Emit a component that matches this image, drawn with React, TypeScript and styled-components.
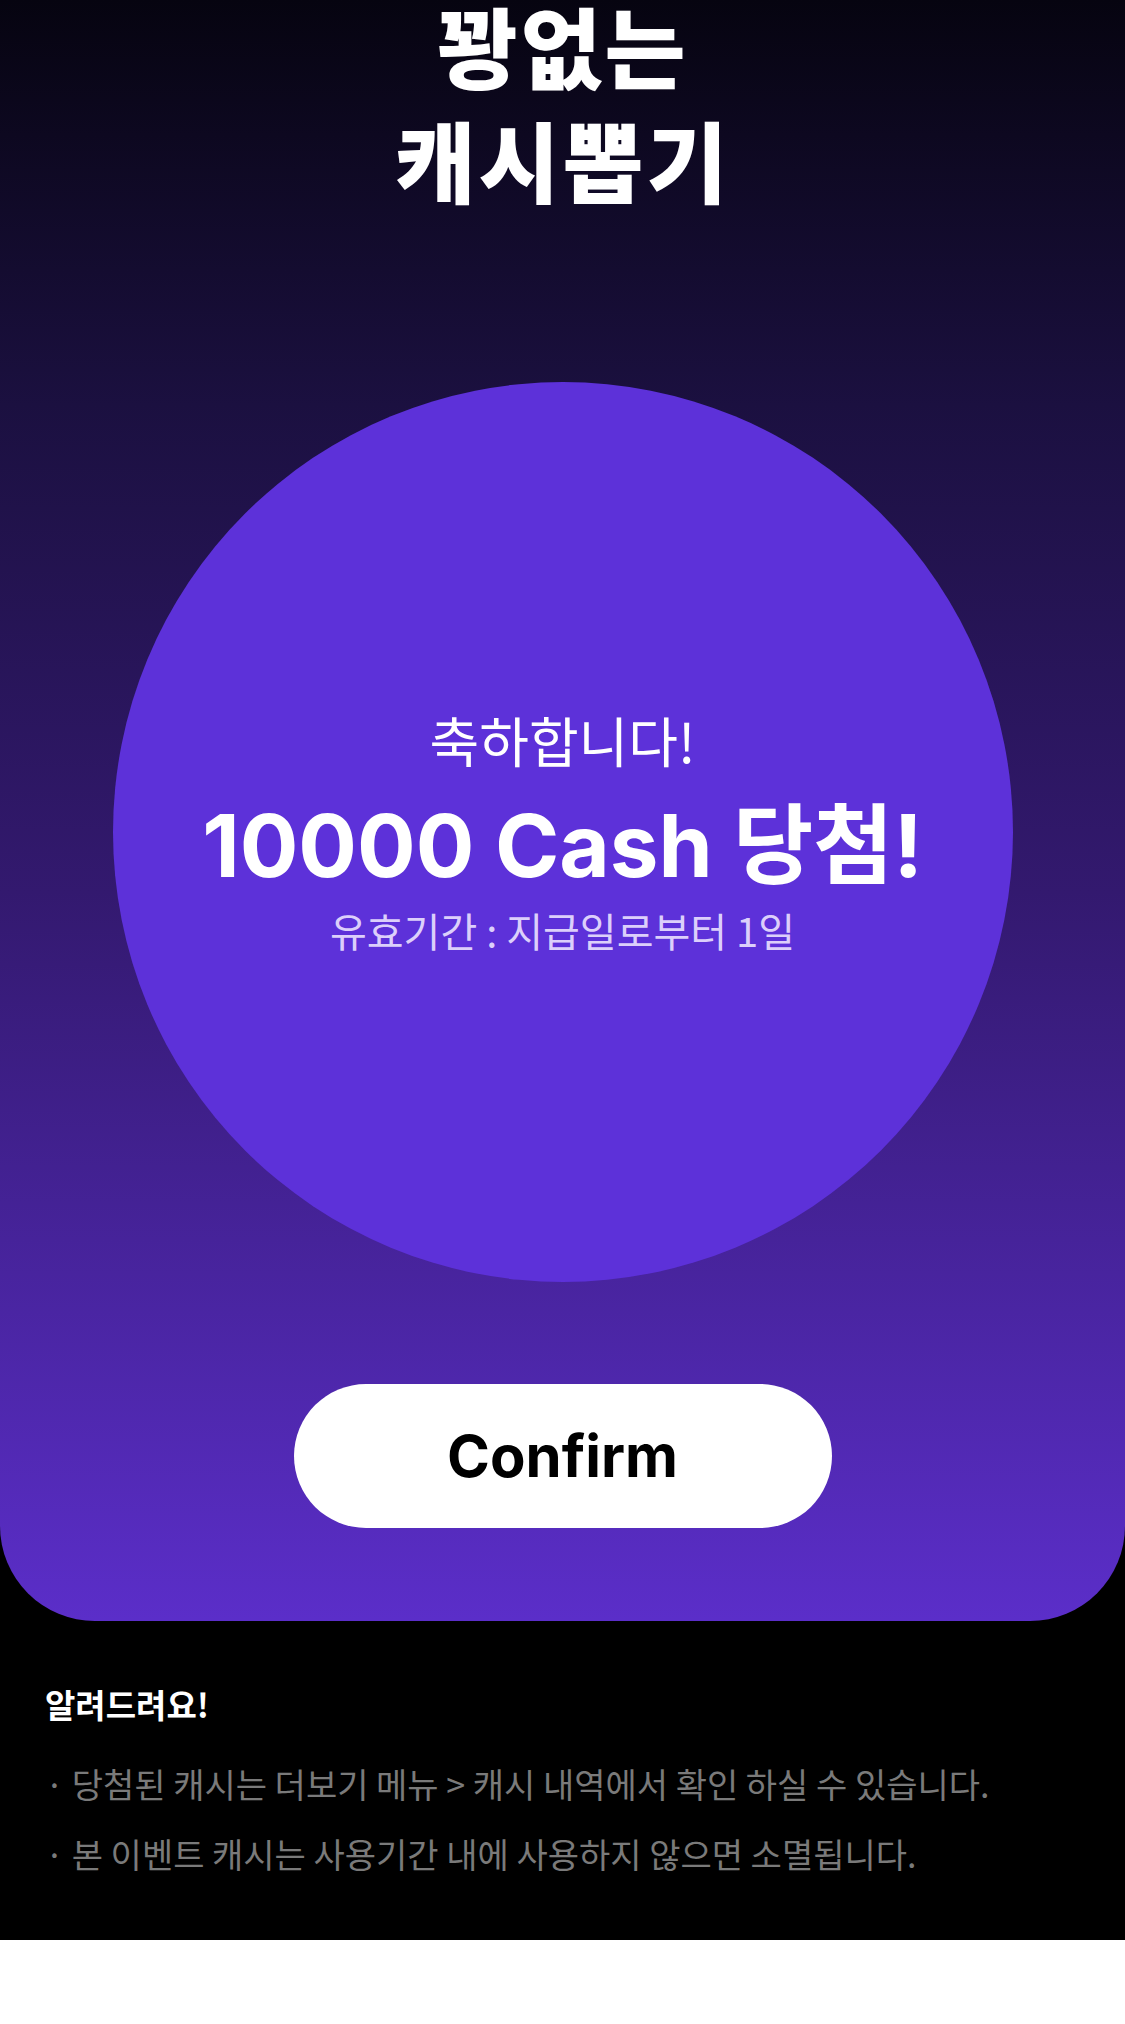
import styled, { createGlobalStyle } from 'styled-components';

const notices = [
  '당첨된 캐시는 더보기 메뉴 > 캐시 내역에서 확인 하실 수 있습니다.',
  '본 이벤트 캐시는 사용기간 내에 사용하지 않으면 소멸됩니다.',
];

export default function App() {
  return (
    <>
      <GlobalStyle />
      <S.Page>
        <S.Hero>
          <S.Title>
            꽝없는
            <br />
            캐시뽑기
          </S.Title>
          <S.Result>
            <S.Congrats>축하합니다!</S.Congrats>
            <S.Prize>10000 Cash 당첨!</S.Prize>
            <S.Expire>유효기간 : 지급일로부터 1일</S.Expire>
          </S.Result>
          <S.ConfirmButton type="button">Confirm</S.ConfirmButton>
        </S.Hero>
        <S.Notice>
          <S.NoticeTitle>알려드려요!</S.NoticeTitle>
          <S.NoticeList>
            {notices.map((text) => (
              <S.NoticeItem key={text}>· {text}</S.NoticeItem>
            ))}
          </S.NoticeList>
        </S.Notice>
      </S.Page>
    </>
  );
}

const GlobalStyle = createGlobalStyle`
  body {
    margin: 0;
    background: #fff;
    font-family: Inter, 'Noto Sans CJK KR', sans-serif;
  }
  * {
    box-sizing: border-box;
  }
`;

const S = {
  Page: styled.div`
    width: 1125px;
    overflow: hidden;
    background: #000;
  `,
  Hero: styled.section`
    height: 1621px;
    display: flex;
    flex-direction: column;
    align-items: center;
    background: linear-gradient(180deg, #060410 0%, #1b1040 25%, #33196f 55%, #5b2ec9 100%);
    border-radius: 0 0 95px 95px;
  `,
  Title: styled.h1`
    margin: -13px 0 0;
    font-family: 'Noto Sans CJK KR', sans-serif;
    font-size: 88px;
    line-height: 114px;
    font-weight: 800;
    letter-spacing: 3px;
    color: #fff;
    text-align: center;
  `,
  Result: styled.div`
    margin-top: 167px;
    width: 900px;
    height: 900px;
    border-radius: 50%;
    background: #5d31d9;
    display: flex;
    flex-direction: column;
    align-items: center;
    justify-content: center;
    color: #fff;
    text-align: center;
  `,
  Congrats: styled.p`
    margin: 0;
    font-family: 'Noto Sans CJK KR', sans-serif;
    font-size: 54px;
    line-height: 64px;
    font-weight: 400;
  `,
  Prize: styled.p`
    margin: 26px 0 0;
    font-family: Inter, 'Noto Sans CJK KR', sans-serif;
    font-size: 87px;
    line-height: 96px;
    font-weight: 700;
  `,
  Expire: styled.p`
    margin: 10px 0 0;
    font-family: 'Noto Sans CJK KR', sans-serif;
    font-size: 40px;
    line-height: 52px;
    font-weight: 400;
    color: #dccffb;
  `,
  ConfirmButton: styled.button`
    margin-top: 102px;
    width: 538px;
    height: 144px;
    border: 0;
    border-radius: 72px;
    background: #fff;
    color: #000;
    font-family: Inter, sans-serif;
    font-size: 58px;
    font-weight: 700;
    cursor: pointer;
  `,
  Notice: styled.section`
    padding: 61px 45px 51px;
  `,
  NoticeTitle: styled.h2`
    margin: 0;
    font-family: 'Noto Sans CJK KR', sans-serif;
    font-size: 33px;
    line-height: 44px;
    font-weight: 700;
    color: #fff;
  `,
  NoticeList: styled.ul`
    margin: 23px 0 0;
    padding: 0;
    list-style: none;
  `,
  NoticeItem: styled.li`
    font-family: 'Noto Sans CJK KR', sans-serif;
    font-size: 34px;
    line-height: 70px;
    color: #7a7a7a;
  `,
};
